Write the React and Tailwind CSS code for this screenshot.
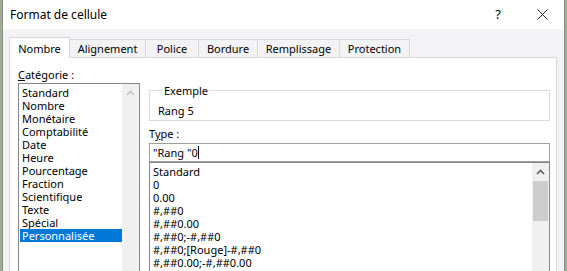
import React from "react";

const categories = [
  "Standard",
  "Nombre",
  "Monétaire",
  "Comptabilité",
  "Date",
  "Heure",
  "Pourcentage",
  "Fraction",
  "Scientifique",
  "Texte",
  "Spécial",
  "Personnalisée",
];

const formats = [
  "Standard",
  "0",
  "0.00",
  "#,##0",
  "#,##0.00",
  "#,##0;-#,##0",
  "#,##0;[Rouge]-#,##0",
  "#,##0.00;-#,##0.00",
];

const tabs = [
  { label: "Nombre", w: "w-[61px]", active: true },
  { label: "Alignement", w: "w-[76px]" },
  { label: "Police", w: "w-[53px]" },
  { label: "Bordure", w: "w-[59px]" },
  { label: "Remplissage", w: "w-[82px]" },
  { label: "Protection", w: "w-[70px]" },
];

const Chevron = ({ color }) => (
  <svg width="9" height="6" viewBox="0 0 9 6">
    <path d="M1 5 L4.5 1.5 L8 5" fill="none" stroke={color} strokeWidth="1.6" />
  </svg>
);

const App = () => {
  return (
    <div
      className="flex w-[567px] h-[271px] overflow-hidden bg-[#9fae93] pl-[2px] text-[11px] leading-[13px] text-black"
      style={{ fontFamily: '"Noto Sans", "Open Sans", sans-serif' }}
    >
      <div className="flex flex-col w-[563px] h-full border-x border-[#8a8a8a] bg-[#f3f2f5]">
        {/* title bar */}
        <div className="flex items-center h-[29px] shrink-0 bg-white pl-[7px] text-[12px]">
          <span>Format de cellule</span>
          <span className="ml-auto mr-[36px] text-[13px]">?</span>
          <svg width="11" height="11" viewBox="0 0 11 11" className="mr-[16px]">
            <path d="M0.5 0.5 L10.5 10.5 M10.5 0.5 L0.5 10.5" stroke="#222" strokeWidth="1" />
          </svg>
        </div>

        <div className="flex flex-col flex-1 pl-[6px] pt-[8px]">
          {/* tabs */}
          <div className="flex items-end h-[20px]">
            {tabs.map((t, i) => (
              <div
                key={i}
                className={
                  t.active
                    ? `${t.w} relative z-10 h-[21px] -mb-[1px] flex items-center justify-center border-x border-t border-[#d9d9d9] bg-white`
                    : `${t.w} h-[18px] flex items-center justify-center border-t border-r border-[#d9d9d9] bg-[#f3f2f5]`
                }
              >
                {t.label}
              </div>
            ))}
          </div>

          {/* panel */}
          <div className="flex flex-1 w-[548px] border border-[#d9d9d9] bg-white pl-[8px]">
            <div className="flex flex-col pt-[10px]">
              <div>
                <span className="underline">C</span>atégorie :
              </div>
              <div className="flex mt-[2px] w-[122px] h-[200px] border border-[#828790] bg-white">
                <div className="flex flex-col flex-1 pt-[2px]">
                  {categories.map((c, i) =>
                    i === categories.length - 1 ? (
                      <div key={i} className="ml-[1px] pl-[2px] bg-[#0078d7] text-white">
                        {c}
                      </div>
                    ) : (
                      <div key={i} className="pl-[3px]">
                        {c}
                      </div>
                    )
                  )}
                </div>
                <div className="flex flex-col w-[17px] bg-[#f0f0f0]">
                  <div className="flex items-center justify-center h-[17px]">
                    <Chevron color="#c2c2c2" />
                  </div>
                </div>
              </div>
            </div>

            <div className="flex flex-col ml-[9px] mt-[26px] w-[401px]">
              <fieldset className="h-[37px] border border-[#dcdcdc] pl-[8px]">
                <legend className="ml-[5px] px-[1px]">Exemple</legend>
                <div className="pt-[7px]">Rang 5</div>
              </fieldset>

              <div className="mt-[6px]">
                T<span className="underline">y</span>pe :
              </div>

              <div className="flex items-center mt-[3px] h-[19px] border border-[#a0a0a0] pl-[3px]">
                <span>"Rang "0</span>
                <span className="w-[1px] h-[13px] bg-black" />
              </div>

              <div className="flex h-[120px] border border-[#828790]">
                <div className="flex flex-col flex-1 pt-[2px] pl-[3px]">
                  {formats.map((f, i) => (
                    <div key={i}>{f}</div>
                  ))}
                </div>
                <div className="flex flex-col w-[17px] bg-[#f0f0f0]">
                  <div className="flex items-center justify-center h-[18px]">
                    <Chevron color="#606060" />
                  </div>
                  <div className="mx-[1px] h-[40px] bg-[#cdcdcd]" />
                </div>
              </div>
            </div>
          </div>
        </div>
      </div>
    </div>
  );
};

export default App;
